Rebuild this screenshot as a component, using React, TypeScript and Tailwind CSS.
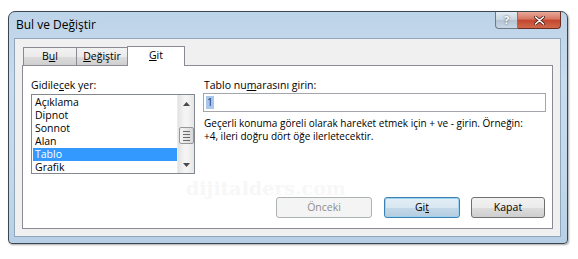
import React from 'react';

const listItems = ['Açıklama', 'Dipnot', 'Sonnot', 'Alan', 'Tablo', 'Grafik'];

function ScrollBar() {
  return (
    <div className="w-[17px] flex flex-col items-center bg-[linear-gradient(to_right,#e3e3e3,#f4f4f4_40%,#f4f4f4_60%,#e6e6e6)] border-l border-[#ececec]">
      <div className="h-[17px] w-full flex items-center justify-center">
        <svg width="7" height="4" viewBox="0 0 7 4">
          <path d="M0 4 L3.5 0 L7 4 Z" fill="#4a4a4a" />
        </svg>
      </div>
      <div className="flex-1 w-full flex flex-col items-center pt-[15px]">
        <div className="w-[15px] h-[17px] rounded-[2px] border border-[#979797] bg-[linear-gradient(to_right,#f3f3f3,#e6e6e6_50%,#d6d6d6)] flex flex-col items-center justify-center gap-[2px]">
          <div className="w-[7px] h-px bg-[#6b6b6b]" />
          <div className="w-[7px] h-px bg-[#6b6b6b]" />
          <div className="w-[7px] h-px bg-[#6b6b6b]" />
          <div className="w-[7px] h-px bg-[#6b6b6b]" />
        </div>
      </div>
      <div className="h-[17px] w-full flex items-center justify-center">
        <svg width="7" height="4" viewBox="0 0 7 4">
          <path d="M0 0 L3.5 4 L7 0 Z" fill="#4a4a4a" />
        </svg>
      </div>
    </div>
  );
}

function DialogButton({
  children,
  variant = 'normal',
}: {
  children: React.ReactNode;
  variant?: 'normal' | 'default' | 'disabled';
}) {
  const styles = {
    normal:
      'border-[#707070] text-black bg-[linear-gradient(to_bottom,#f2f2f2_0%,#ebebeb_50%,#dddddd_50%,#cfcfcf_100%)]',
    default:
      'border-[#3c7fb1] text-black bg-[linear-gradient(to_bottom,#e3eef6_0%,#d8e7f1_50%,#c4d9e8_50%,#b4cde0_100%)] shadow-[inset_0_0_0_1px_#9cd3f0]',
    disabled: 'border-[#adb2b5] text-[#8d8d8d] bg-[#f4f4f4]',
  }[variant];
  return (
    <div
      className={`h-[21px] rounded-[3px] border flex items-center justify-center text-[10.5px] ${styles}`}
    >
      {children}
    </div>
  );
}

export default function App() {
  return (
    <div className="w-[578px] h-[259px] bg-white pt-[11px] pl-[8px] font-['Open_Sans',sans-serif] text-black relative overflow-hidden">
      {/* Window */}
      <div className="w-[560px] h-[233px] rounded-t-[7px] rounded-b-[4px] border border-[#3b4650] bg-[linear-gradient(to_bottom,#bdd3e8,#c9dcee_30%,#c3d8ec_70%,#b8d0e6)] flex flex-col shadow-[1px_1px_2px_rgba(0,0,0,0.35)]">
        {/* Title bar */}
        <div className="h-[26px] flex items-start justify-between pl-[7px] pr-[6px]">
          <div className="text-[12px] leading-none mt-[7px] text-black">Bul ve Değiştir</div>
          <div className="flex">
            <div className="w-[23px] h-[17px] rounded-bl-[4px] border border-t-0 border-[#6d7b89] bg-[linear-gradient(to_bottom,#e4ecf3,#c7d4e0_50%,#b3c3d2_50%,#c9d7e4)] flex items-center justify-center text-[11px] font-bold text-white [text-shadow:0_0_2px_#30404f]">
              ?
            </div>
            <div className="w-[43px] h-[17px] rounded-br-[4px] border border-t-0 border-l-0 border-[#6b2d22] bg-[linear-gradient(to_bottom,#e9a99a,#d57560_45%,#c4442c_50%,#cf6a4c)] flex items-center justify-center">
              <svg width="11" height="9" viewBox="0 0 11 9">
                <path
                  d="M1.5 1 L9.5 8 M9.5 1 L1.5 8"
                  stroke="#4a2118"
                  strokeWidth="3"
                  strokeLinecap="round"
                />
                <path
                  d="M1.5 1 L9.5 8 M9.5 1 L1.5 8"
                  stroke="#ffffff"
                  strokeWidth="1.6"
                  strokeLinecap="round"
                />
              </svg>
            </div>
          </div>
        </div>

        {/* Client area */}
        <div className="flex-1 ml-[5px] mr-[6px] mb-[6px] bg-[#f0f0f0] border border-[#8fa6bb] p-[7px] flex flex-col">
          {/* Tabs */}
          <div className="flex items-end h-[19px] pl-[1px] text-[10.5px]">
            <div className="w-[54px] h-[18px] border border-b-0 border-[#898c95] bg-[linear-gradient(to_bottom,#f2f2f2,#ebebeb_50%,#dddddd_50%,#cfcfcf)] flex items-center justify-center">
              B<span className="underline">u</span>l
            </div>
            <div className="w-[52px] h-[18px] -ml-px border border-b-0 border-[#898c95] bg-[linear-gradient(to_bottom,#f2f2f2,#ebebeb_50%,#dddddd_50%,#cfcfcf)] flex items-center justify-center">
              <span className="underline">D</span>eğiştir
            </div>
            <div className="w-[58px] h-[20px] -ml-px -mb-px relative z-10 border border-b-0 border-[#898c95] bg-white flex items-center justify-center pb-[1px]">
              <span className="underline">G</span>it
            </div>
          </div>

          {/* Tab panel */}
          <div className="flex-1 bg-white border border-[#898c95] flex flex-col px-[8px] pt-[11px] pb-[10px] text-[10.5px]">
            <div className="flex gap-[8px]">
              {/* Left column */}
              <div className="w-[164px] flex flex-col">
                <div className="h-[16px] leading-[16px]">
                  Gidile<span className="underline">c</span>ek yer:
                </div>
                <div className="h-[80px] mt-[1px] border border-[#828790] flex">
                  <div className="flex-1 flex flex-col py-[1px] pl-px">
                    {listItems.map((item) => (
                      <div
                        key={item}
                        className={`h-[13px] leading-[13px] pl-[2px] ${
                          item === 'Tablo' ? 'bg-[#3399ff] text-white' : ''
                        }`}
                      >
                        {item}
                      </div>
                    ))}
                  </div>
                  <ScrollBar />
                </div>
              </div>

              {/* Right column */}
              <div className="flex-1 flex flex-col -mr-[2px]">
                <div className="h-[16px] leading-[16px] pl-px">
                  Tablo nu<span className="underline">m</span>arasını girin:
                </div>
                <div className="h-[19px] border border-[#a3a6ad] flex items-center pl-[2px]">
                  <span className="bg-[#a9c8ea] text-[#1d3559] leading-[13px] px-px">1</span>
                </div>
                <div className="mt-[5px] pl-px text-[10px] whitespace-nowrap flex flex-col">
                  <div className="h-[13px] leading-[13px]">
                    Geçerli konuma göreli olarak hareket etmek için + ve - girin. Örneğin:
                  </div>
                  <div className="h-[13px] leading-[13px]">+4, ileri doğru dört öğe ilerletecektir.</div>
                </div>
              </div>
            </div>

            {/* Buttons */}
            <div className="mt-auto flex justify-end -mr-px">
              <div className="w-[96px] mr-[12px]">
                <DialogButton variant="disabled">Önceki</DialogButton>
              </div>
              <div className="w-[76px] mr-[11px]">
                <DialogButton variant="default">
                  Gi<span className="underline">t</span>
                </DialogButton>
              </div>
              <div className="w-[74px]">
                <DialogButton>Kapat</DialogButton>
              </div>
            </div>
          </div>
        </div>
      </div>

      {/* faint watermark over the panel */}
      <div className="absolute left-[186px] top-[174px] text-[19px] font-bold font-['DejaVu_Serif',serif] text-[#f7f7f7] pointer-events-none select-none">
        dijitalders.com
      </div>
    </div>
  );
}
